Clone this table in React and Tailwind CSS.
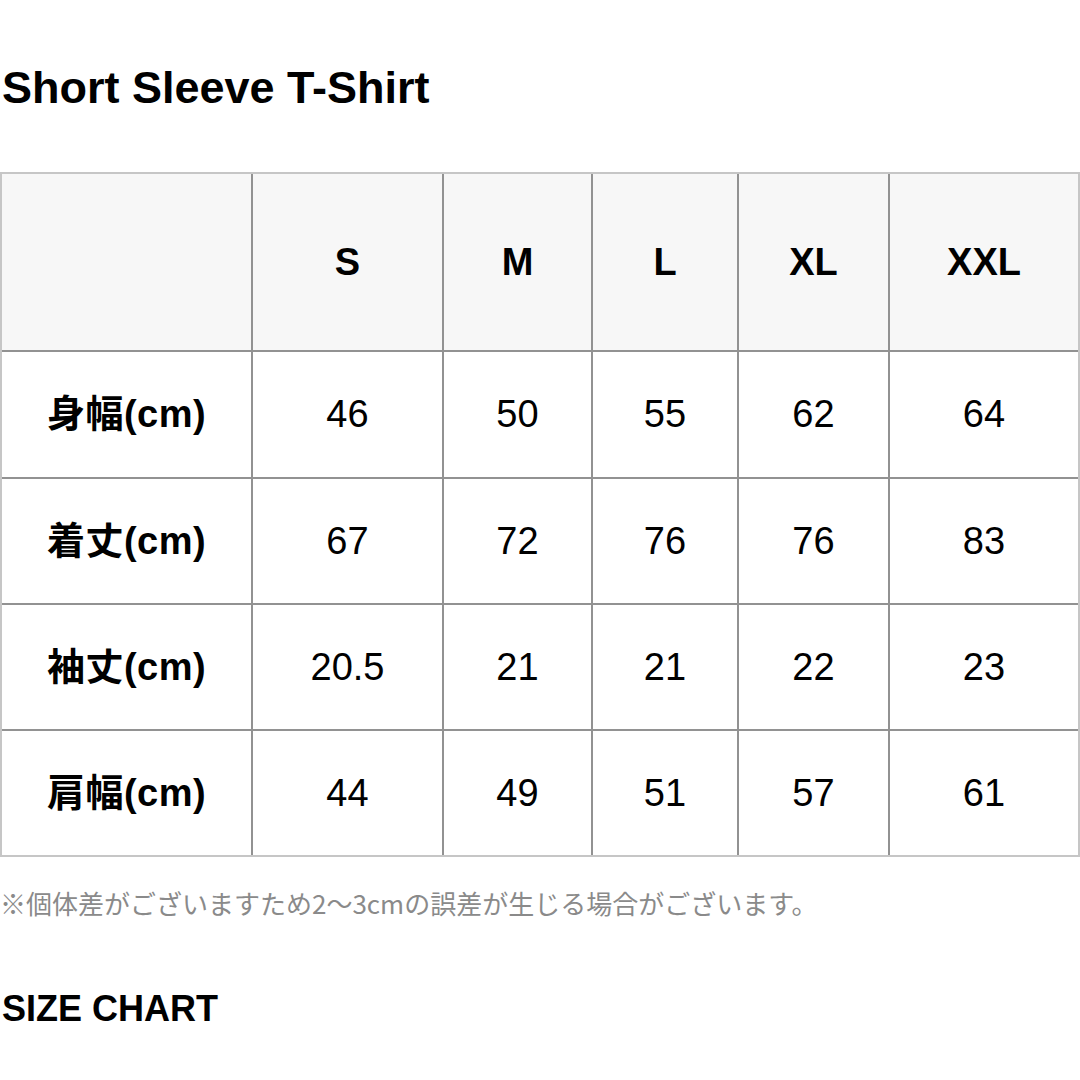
import { Fragment } from "react";

const sizes = ["S", "M", "L", "XL", "XXL"];

const rows = [
  { label: "身幅(cm)", values: ["46", "50", "55", "62", "64"] },
  { label: "着丈(cm)", values: ["67", "72", "76", "76", "83"] },
  { label: "袖丈(cm)", values: ["20.5", "21", "21", "22", "23"] },
  { label: "肩幅(cm)", values: ["44", "49", "51", "57", "61"] },
];

const font = { fontFamily: '"Liberation Sans", "Noto Sans CJK JP", Arial, sans-serif' };

const App = () => {
  return (
    <div className="w-[1080px] h-[1080px] bg-white text-black overflow-hidden" style={font}>
      <h1 className="pt-[65px] pl-[2px] text-[45px] leading-none font-bold">Short Sleeve T-Shirt</h1>

      <div className="mt-[62px] border-2 border-[#c6c6c6] bg-[#929292] grid grid-cols-[249px_189px_147px_144px_149px_188px] grid-rows-[176px_125px_124px_124px_124px] gap-[2px]">
        <div className="bg-[#f7f7f7]" />
        {sizes.map((size) => (
          <div
            key={size}
            className="bg-[#f7f7f7] flex items-center justify-center text-[38px] font-bold"
          >
            {size}
          </div>
        ))}

        {rows.map((row) => (
          <Fragment key={row.label}>
            <div className="bg-white flex items-center justify-center text-[38px] font-bold tracking-[0.5px]">
              {row.label}
            </div>
            {row.values.map((value, index) => (
              <div
                key={index}
                className="bg-white flex items-center justify-center text-[38px]"
              >
                {value}
              </div>
            ))}
          </Fragment>
        ))}
      </div>

      <p
        className="mt-[33px] text-[26px] leading-none text-[#8a8a8a]"
        style={{ fontFamily: '"Noto Sans CJK JP", sans-serif' }}
      >
        ※個体差がございますため2〜3cmの誤差が生じる場合がございます。
      </p>

      <h2 className="mt-[75px] pl-[2px] text-[36px] leading-none font-bold">SIZE CHART</h2>
    </div>
  );
};

export default App;
